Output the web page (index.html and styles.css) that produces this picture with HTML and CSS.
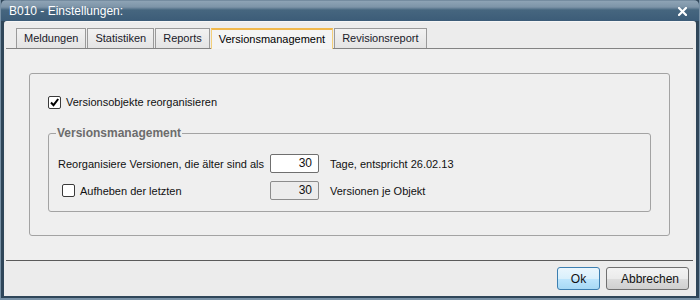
FILE: index.html
```html
<!DOCTYPE html>
<html lang="de">
<head>
    <meta charset="UTF-8">
    <title>B010 - Einstellungen:</title>
    <link rel="stylesheet" href="styles.css">
</head>
<body>
    <div class="window">
        <div class="titlebar">
            <span class="title">B010 - Einstellungen:</span>
            <svg class="close" width="9" height="9" viewBox="0 0 9 9">
                <path d="M1 1 L8 8 M8 1 L1 8" stroke="#fff" stroke-width="2.2" stroke-linecap="square"/>
            </svg>
        </div>

        <div class="client">
            <div class="tabs">
                <div class="tab">Meldungen</div>
                <div class="tab">Statistiken</div>
                <div class="tab">Reports</div>
                <div class="tab active">Versionsmanagement</div>
                <div class="tab">Revisionsreport</div>
            </div>

            <div class="tabpane">
                <div class="group">
                    <label class="check">
                        <span class="box">
                            <svg width="11" height="11" viewBox="0 0 11 11">
                                <path d="M2 5.5 L4.5 8.2 L9.2 2" fill="none" stroke="#000" stroke-width="2"/>
                            </svg>
                        </span>
                        Versionsobjekte reorganisieren
                    </label>

                    <fieldset class="versions">
                        <legend>Versionsmanagement</legend>
                        <div class="row">
                            <span class="row-label">Reorganisiere Versionen, die älter sind als</span>
                            <span class="field">30</span>
                            <span>Tage, entspricht 26.02.13</span>
                        </div>
                        <div class="row">
                            <label class="check indent">
                                <span class="box"></span>
                                Aufheben der letzten
                            </label>
                            <span class="field disabled">30</span>
                            <span>Versionen je Objekt</span>
                        </div>
                    </fieldset>
                </div>
            </div>

            <div class="buttons">
                <button class="btn default">Ok</button>
                <button class="btn">Abbrechen</button>
            </div>
        </div>
    </div>
</body>
</html>
```

FILE: styles.css
```css
html, body {
    margin: 0;
    padding: 0;
}
body {
    font-family: 'Liberation Sans', Arial, sans-serif;
    font-size: 11px;
    color: #111;
    width: 700px;
    height: 300px;
    overflow: hidden;
}
.window {
    box-sizing: border-box;
    height: 300px;
    display: flex;
    flex-direction: column;
    background: #2f4659;
    border-left: 1px solid #7891a6;
    border-right: 1px solid #7891a6;
    border-bottom: 2px solid #7891a6;
}
.titlebar {
    height: 21px;
    flex: none;
    display: flex;
    align-items: center;
    justify-content: space-between;
    padding: 0 12px 0 8px;
    background: linear-gradient(to bottom, #5c758b 0, #8ea3b5 1px, #7d94a8 7px, #46667f 10px, #3c5c78 21px);
    border-radius: 5px 5px 0 0;
}
.title {
    color: #fff;
    font-size: 12px;
}
.close {
    margin-top: 1px;
}
.client {
    flex: 1;
    margin: 0 3px 2px;
    padding: 0 3px 0 2px;
    background: #ececec;
    border-top: 1px solid #f6f6f6;
    border-radius: 3px 3px 0 0;
    display: flex;
    flex-direction: column;
}

/* tabs */
.tabs {
    display: flex;
    align-items: flex-end;
    padding: 5px 0 0 10px;
    height: 21px;
    position: relative;
    z-index: 1;
}
.tab {
    height: 19px;
    line-height: 18px;
    padding: 0 7px;
    font-size: 11px;
    color: #1a1a2a;
    border: 1px solid #9a9a9a;
    border-bottom: none;
    margin-right: 1px;
    background: linear-gradient(to bottom, #f2f2f2, #e4e4e4);
}
.tab.active {
    height: 21px;
    line-height: 19px;
    margin-bottom: -1px;
    border-color: #f3cf7a;
    border-top: 2px solid #f0b84c;
    background: #f4f4f4;
    box-sizing: border-box;
    padding: 0 7px;
    color: #000;
}
.tabpane {
    border-top: 1px solid #838383;
    border-bottom: 1px solid #5a5a5a;
    background: #efefef;
    padding: 24px 23px 24px;
}

/* group boxes */
.group {
    border: 1px solid #a3a3a3;
    border-radius: 3px;
    padding: 21px 18px 23px 18px;
}
.check {
    display: flex;
    align-items: center;
    gap: 5px;
    height: 14px;
}
.check.indent {
    padding-left: 4px;
}
.box {
    box-sizing: border-box;
    width: 13px;
    height: 13px;
    border: 1px solid #3a3a3a;
    border-radius: 2px;
    background: #fff;
    display: flex;
    align-items: center;
    justify-content: center;
}
.versions {
    margin: 17px 0 0;
    padding: 14px 9px 11px;
    border: 1px solid #a3a3a3;
    border-radius: 3px;
    display: flex;
    flex-direction: column;
    gap: 8px;
}
.versions legend {
    color: #6c6c6c;
    font-weight: bold;
    font-size: 12px;
    padding: 0 1px;
    margin-left: -2px;
}
.row {
    display: grid;
    grid-template-columns: 212px 60px auto;
    align-items: center;
    height: 19px;
}
.field {
    box-sizing: border-box;
    width: 49px;
    height: 19px;
    border: 1px solid #6f6f6f;
    border-radius: 2px;
    background: #fff;
    text-align: right;
    padding: 0 6px;
    line-height: 17px;
    font-size: 12px;
}
.field.disabled {
    background: #ececec;
    border-color: #8c8c8c;
}

/* dialog buttons */
.buttons {
    display: flex;
    justify-content: flex-end;
    gap: 6px;
    padding: 6px 4px 0 0;
}
.btn {
    font-family: inherit;
    font-size: 12px;
    height: 23px;
    padding: 0 14px;
    border: 1px solid #707070;
    border-radius: 3px;
    color: #111;
    background: linear-gradient(to bottom, #f3f3f3 0, #ebebeb 50%, #dddddd 51%, #cfcfcf 100%);
}
.btn.default {
    width: 43px;
    padding: 0;
    border-color: #3c7fb1;
    background: linear-gradient(to bottom, #eaf6fd 0, #d9f0fc 50%, #bee6fd 51%, #a7d9f5 100%);
}
.btn:not(.default) {
    width: 83px;
}
```
